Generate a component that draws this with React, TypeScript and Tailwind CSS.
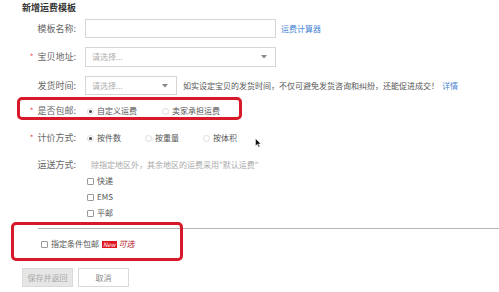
import React from "react";

const Caret = () => (
  <svg width="6" height="4" viewBox="0 0 6 4" className="shrink-0">
    <path d="M0 0 L6 0 L3 3.5 Z" fill="#888" />
  </svg>
);

const Radio = ({ checked, label, className = "" }: { checked?: boolean; label: string; className?: string }) => (
  <div className={`flex items-center ${className}`}>
    <span className="w-[7px] h-[7px] rounded-full border border-[#dcdcdc] flex items-center justify-center bg-white">
      {checked && <span className="w-[3px] h-[3px] rounded-full bg-[#444]" />}
    </span>
    <span className="ml-[3px] text-[8px] text-[#555]">{label}</span>
  </div>
);

const Check = ({ label }: { label: string }) => (
  <div className="flex items-center h-[16px] ml-[87px]">
    <span className="w-[7px] h-[7px] rounded-[1px] border border-[#999] bg-white" />
    <span className="ml-[3px] text-[8px] text-[#555]">{label}</span>
  </div>
);

const Label = ({ text, star }: { text: string; star?: boolean }) => (
  <div className="w-[76px] flex justify-end items-center shrink-0 text-[9px] text-[#666]">
    {star && <span className="text-[#e0484e] text-[8px] mr-[4px]">*</span>}
    <span>{text}</span>
  </div>
);

export default function App() {
  return (
    <div
      className="relative w-[499px] h-[292px] bg-white overflow-hidden"
      style={{ fontFamily: '"Noto Sans CJK SC", "Noto Sans", sans-serif' }}
    >
      <div className="pt-[2px] pl-[22px] text-[9px] leading-[12px] font-bold text-[#333]">新增运费模板</div>

      <div className="mt-[5px] flex items-center h-[19px]">
        <Label text="模板名称:" />
        <div className="ml-[9px] w-[191px] h-[19px] border border-[#d6d6d6] bg-white" />
        <span className="ml-[5px] text-[8px] text-[#4a86d4]">运费计算器</span>
      </div>

      <div className="mt-[9px] flex items-center h-[20px]">
        <Label text="宝贝地址:" star />
        <div className="ml-[9px] w-[191px] h-[20px] border border-[#d6d6d6] bg-white flex items-center justify-between pl-[6px] pr-[8px]">
          <span className="text-[8px] text-[#b0b0b0]">请选择...</span>
          <Caret />
        </div>
      </div>

      <div className="mt-[9px] flex items-center h-[19px]">
        <Label text="发货时间:" />
        <div className="ml-[9px] w-[92px] h-[19px] border border-[#d6d6d6] bg-white flex items-center justify-between pl-[6px] pr-[8px]">
          <span className="text-[8px] text-[#b0b0b0]">请选择...</span>
          <Caret />
        </div>
        <span className="ml-[6px] text-[8px] text-[#555] whitespace-nowrap">
          如实设定宝贝的发货时间，不仅可避免发货咨询和纠纷，还能促进成交！
          <span className="ml-[3px] text-[#4a86d4]">详情</span>
        </span>
      </div>

      <div className="mt-[7px] flex items-center h-[18px]">
        <Label text="是否包邮:" star />
        <Radio checked label="自定义运费" className="ml-[11px]" />
        <Radio label="卖家承担运费" className="ml-[25px]" />
      </div>

      <div className="mt-[9px] flex items-center h-[18px]">
        <Label text="计价方式:" star />
        <Radio checked label="按件数" className="ml-[11px]" />
        <Radio label="按重量" className="ml-[24px]" />
        <Radio label="按体积" className="ml-[24px]" />
      </div>

      <div className="mt-[10px] flex items-center h-[16px]">
        <Label text="运送方式:" />
        <span className="ml-[15px] text-[8px] text-[#aaa] whitespace-nowrap">
          除指定地区外，其余地区的运费采用"默认运费"
        </span>
      </div>

      <Check label="快递" />
      <Check label="EMS" />
      <Check label="平邮" />

      <div className="mt-[7px] ml-[38px] border-t border-[#b4b4b4]" />

      <div className="mt-[7px] flex items-center h-[16px] ml-[41px]">
        <span className="w-[7px] h-[7px] rounded-[1px] border border-[#999] bg-white" />
        <span className="ml-[3px] text-[8px] text-[#555]">指定条件包邮</span>
        <span className="ml-[3px] bg-[#e0141e] text-white text-[6px] leading-[7px] px-[1px] italic">New</span>
        <span className="ml-[2px] text-[8px] text-[#b3232b] italic">可选</span>
      </div>

      <div className="mt-[16px] flex items-center ml-[22px]">
        <div className="w-[51px] h-[19px] bg-[#e6e6e6] border border-[#dadada] flex items-center justify-center text-[8px] text-[#a8a8a8]">
          保存并返回
        </div>
        <div className="ml-[5px] w-[51px] h-[19px] bg-white border border-[#dadada] flex items-center justify-center text-[8px] text-[#888]">
          取消
        </div>
      </div>

      {/* annotation boxes */}
      <div className="absolute left-[17px] top-[97px] w-[225px] h-[23px] border-[3px] border-[#d71a2a] rounded-[5px]" />
      <div className="absolute left-[11px] top-[222px] w-[172px] h-[39px] border-[3px] border-[#d71a2a] rounded-[5px]" />

      {/* mouse cursor */}
      <svg className="absolute left-[255px] top-[138px]" width="7" height="10" viewBox="0 0 7 10">
        <path d="M0.5 0.5 L0.5 8 L2.3 6.3 L3.6 9.3 L4.8 8.8 L3.5 5.9 L6 5.9 Z" fill="#111" stroke="#fff" strokeWidth="0.5" />
      </svg>
    </div>
  );
}
